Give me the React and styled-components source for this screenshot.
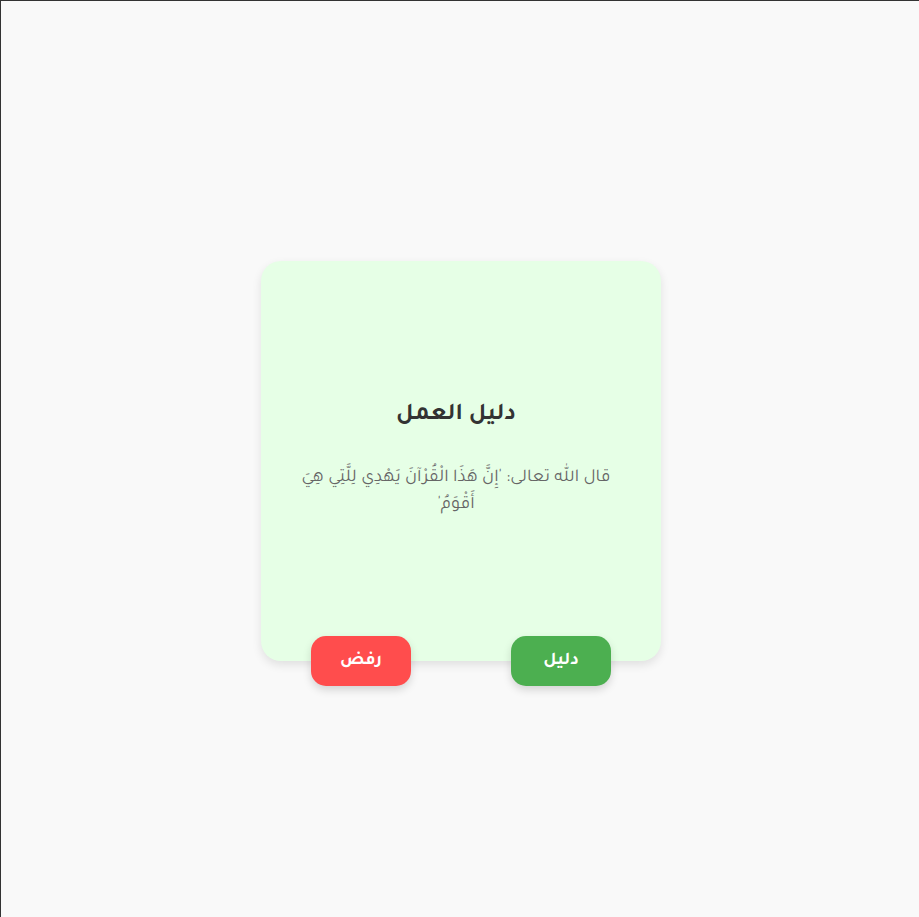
import React from 'react'
import styled, { createGlobalStyle } from 'styled-components'

const GlobalStyle = createGlobalStyle`
  html, body {
    margin: 0;
    padding: 0;
  }
  body {
    background: #f9f9f9;
    font-family: "Tajawal", "Noto Sans Arabic", "DejaVu Sans", sans-serif;
  }
`

const Page = styled.div`
  box-sizing: border-box;
  min-height: 100vh;
  border-top: 1px solid #333;
  border-left: 1px solid #333;
  display: flex;
  align-items: center;
  justify-content: center;
  direction: rtl;
`

const Card = styled.div`
  position: relative;
  box-sizing: border-box;
  width: 400px;
  height: 400px;
  padding: 40px 45px 42px 35px;
  margin: 3px 0 0 2px;
  background: #e6ffe6;
  border-radius: 20px;
  box-shadow: 0 4px 10px rgba(0, 0, 0, 0.1);
  display: flex;
  flex-direction: column;
  align-items: center;
  justify-content: center;
  text-align: center;
`

const Title = styled.h2`
  margin: 0 0 34px;
  font-size: 24px;
  line-height: 30px;
  font-weight: bold;
  color: #333;
`

const Verse = styled.p`
  margin: 0;
  font-size: 18px;
  line-height: 27px;
  color: #666;
`

const Actions = styled.div`
  position: absolute;
  left: 50px;
  right: 50px;
  bottom: -25px;
  display: flex;
  justify-content: space-between;
`

const Button = styled.button`
  width: 100px;
  height: 50px;
  border: none;
  border-radius: 15px;
  background: ${p => p.$color};
  color: #fff;
  font-family: inherit;
  font-size: 18px;
  font-weight: bold;
  box-shadow: 0 4px 8px rgba(0, 0, 0, 0.15);
  cursor: pointer;
`

export default function App() {
  return (
    <>
      <GlobalStyle />
      <Page>
        <Card>
          <Title>دليل العمل</Title>
          <Verse>قال الله تعالى: 'إِنَّ هَذَا الْقُرْآنَ يَهْدِي لِلَّتِي هِيَ أَقْوَمُ'</Verse>
          <Actions>
            <Button $color="#4caf50">دليل</Button>
            <Button $color="#ff4d4d">رفض</Button>
          </Actions>
        </Card>
      </Page>
    </>
  )
}
